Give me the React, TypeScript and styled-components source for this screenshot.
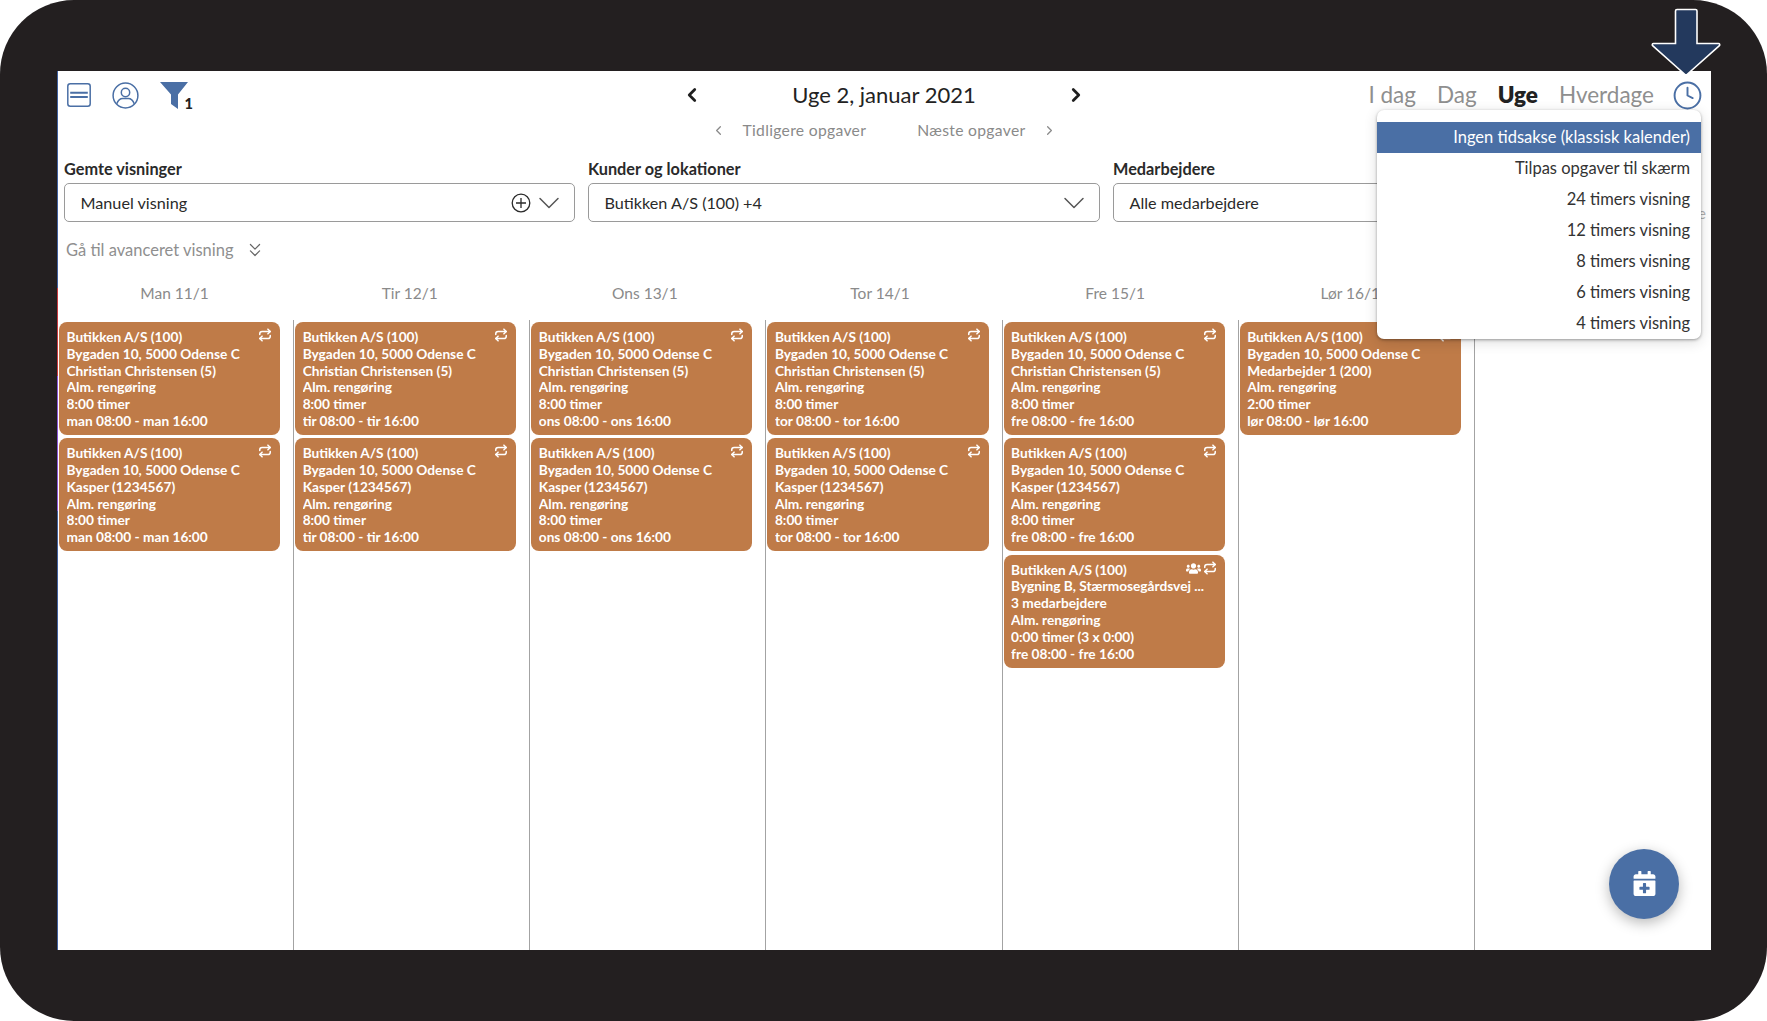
import React from "react";
import styled, { createGlobalStyle } from "styled-components";
import { ChevronDown, ChevronLeft, ChevronRight, ChevronsDown, Clock, Repeat } from "lucide-react";
import { FaCalendarPlus, FaUsers } from "react-icons/fa";

const FONT = `"Lato", "Open Sans", sans-serif`;
const BLUE = "#4a6fa5";

const Global = createGlobalStyle`
  html, body { margin: 0; padding: 0; background: #fff; }
  * { box-sizing: border-box; }
  body { font-family: ${FONT}; color: #2a2a2a; }
`;

const Frame = styled.div`
  position: relative;
  width: 1767px;
  height: 1021px;
  padding: 71px 56px 71px 57px;
  background: #231f20;
  border-radius: 74px;
  overflow: hidden;
`;
const Panel = styled.main`
  position: relative;
  height: 879px;
  background: #fff;
  display: flex;
  flex-direction: column;
  overflow: hidden;
  &::before {
    content: "";
    position: absolute;
    left: 0;
    top: 0;
    bottom: 0;
    width: 1px;
    background: linear-gradient(
      #3f5f9e 0 217px,
      #c8393f 217px 305px,
      #8a55d8 305px 440px,
      #3f5f9e 440px
    );
  }
`;
const TopBar = styled.header`
  height: 48px;
  display: grid;
  grid-template-columns: 1fr auto 1fr;
  align-items: center;
`;
const LeftIcons = styled.div`
  display: flex;
  align-items: center;
  gap: 21px;
  padding-left: 10px;
`;
const FilterIcon = styled.div`
  position: relative;
  width: 33px;
  height: 27px;
`;
const FilterCount = styled.span`
  position: absolute;
  right: 0;
  bottom: -2px;
  font-size: 14.5px;
  line-height: 14px;
  font-weight: 900;
  color: #222;
`;
const TitleGroup = styled.div`
  display: flex;
  align-items: center;
  gap: 89px;
  color: #1f1f1f;
`;
const Title = styled.h1`
  margin: 0;
  font-size: 22px;
  line-height: 28px;
  font-weight: 400;
  color: #222;
`;
const ViewTabs = styled.nav`
  display: flex;
  align-items: center;
  justify-content: flex-end;
  padding-right: 8px;
`;
const ViewTab = styled.span<{ $active?: boolean }>`
  margin-right: 21px;
  font-size: 22.5px;
  line-height: 28px;
  font-weight: ${(p) => (p.$active ? 800 : 400)};
  color: ${(p) => (p.$active ? "#222" : "#8f8f8f")};
  &:nth-last-of-type(1) { margin-right: 18px; }
`;
const SubNav = styled.div`
  height: 22px;
  display: flex;
  align-items: center;
  justify-content: center;
  gap: 17px;
  color: #8a8a8a;
  font-size: 15.7px;
  letter-spacing: 0.3px;
`;
const SubLabel = styled.span<{ $gap?: boolean }>`
  margin-left: ${(p) => (p.$gap ? "34px" : "0")};
`;
const Filters = styled.section`
  position: relative;
  display: grid;
  grid-template-columns: 511px 512px 511px;
  column-gap: 13px;
  margin-top: 18px;
  padding-left: 7px;
`;
const FilterColumn = styled.div`
  display: flex;
  flex-direction: column;
  gap: 4px;
`;
const FilterLabel = styled.label`
  font-size: 16.3px;
  line-height: 20px;
  font-weight: 700;
  color: #2a2a2a;
`;
const Select = styled.div`
  height: 39px;
  display: flex;
  align-items: center;
  padding: 0 7px 0 15.5px;
  border: 1.5px solid #9a9a9a;
  border-radius: 5px;
  font-size: 16.2px;
  color: #2a2a2a;
`;
const SelectValue = styled.span`
  flex: 1;
`;
const PlusBadge = styled.svg`
  width: 20px;
  height: 20px;
`;
const ClearLink = styled.span`
  position: absolute;
  right: 5px;
  top: 45px;
  font-size: 15px;
  color: #b0b0b0;
`;
const Advanced = styled.div`
  height: 20px;
  display: flex;
  align-items: center;
  gap: 10px;
  margin-top: 18px;
  padding-left: 9px;
  font-size: 16.5px;
  line-height: 20px;
  color: #8f8f8f;
`;
const DayHeaders = styled.div`
  display: grid;
  grid-template-columns: repeat(7, 1fr);
  height: 60px;
  padding: 23px 8px 0 0;
`;
const DayHeader = styled.div`
  text-align: center;
  font-size: 15.5px;
  line-height: 20px;
  color: #8a8a8a;
`;
const Board = styled.div`
  flex: 1;
  display: grid;
  grid-template-columns: repeat(7, 1fr);
  padding-left: 1px;
`;
const Column = styled.div`
  display: flex;
  flex-direction: column;
  gap: 3.3px;
  padding: 2px 13px 0 1px;
  border-right: 1.5px solid #a3a3a3;
  &:last-child { border-right: 0; }
`;
const Card = styled.article`
  position: relative;
  height: 113px;
  padding: 7px 7px 0 7.5px;
  border-radius: 8px;
  background: #bf7b48;
  color: #fff;
  font-size: 13.7px;
  line-height: 16.8px;
  font-weight: 700;
`;
const CardLine = styled.div`
  white-space: nowrap;
  overflow: hidden;
`;
const CardIcons = styled.div`
  position: absolute;
  top: 6px;
  right: 8px;
  display: flex;
  align-items: center;
  gap: 2px;
`;
const Dropdown = styled.ul`
  position: absolute;
  left: 1320px;
  top: 39px;
  width: 324px;
  height: 229px;
  margin: 0;
  padding: 12px 0 0;
  list-style: none;
  background: #fff;
  border-radius: 7px;
  box-shadow: 0 1px 3px rgba(0, 0, 0, 0.35), 0 3px 14px rgba(0, 0, 0, 0.14);
`;
const DropdownItem = styled.li<{ $active?: boolean }>`
  height: 31px;
  padding-right: 11px;
  text-align: right;
  font-size: 16.5px;
  line-height: 30px;
  background: ${(p) => (p.$active ? BLUE : "transparent")};
  color: ${(p) => (p.$active ? "#fff" : "#333")};
`;
const Fab = styled.button`
  position: absolute;
  left: 1552px;
  top: 777.5px;
  width: 70px;
  height: 70px;
  display: flex;
  align-items: center;
  justify-content: center;
  border: 0;
  border-radius: 50%;
  background: ${BLUE};
  color: #fff;
  box-shadow: 0 4px 14px rgba(0, 0, 0, 0.28);
`;
const ArrowMark = styled.svg`
  position: absolute;
  left: 1650px;
  top: 6px;
  width: 72px;
  height: 72px;
`;

type Task = { lines: string[]; team?: boolean };
const mk = (who: string, day: string, hours = "8:00 timer"): Task => ({
  lines: ["Butikken A/S (100)", "Bygaden 10, 5000 Odense C", who, "Alm. rengøring", hours, `${day} 08:00 - ${day} 16:00`],
});
const CHR = "Christian Christensen (5)";
const KAS = "Kasper (1234567)";
const days: { head: string; tasks: Task[] }[] = [
  { head: "Man 11/1", tasks: [mk(CHR, "man"), mk(KAS, "man")] },
  { head: "Tir 12/1", tasks: [mk(CHR, "tir"), mk(KAS, "tir")] },
  { head: "Ons 13/1", tasks: [mk(CHR, "ons"), mk(KAS, "ons")] },
  { head: "Tor 14/1", tasks: [mk(CHR, "tor"), mk(KAS, "tor")] },
  {
    head: "Fre 15/1",
    tasks: [
      mk(CHR, "fre"),
      mk(KAS, "fre"),
      {
        team: true,
        lines: ["Butikken A/S (100)", "Bygning B, Stærmosegårdsvej ...", "3 medarbejdere", "Alm. rengøring", "0:00 timer (3 x 0:00)", "fre 08:00 - fre 16:00"],
      },
    ],
  },
  { head: "Lør 16/1", tasks: [mk("Medarbejder 1 (200)", "lør", "2:00 timer")] },
  { head: "", tasks: [] },
];
const menu = ["Ingen tidsakse (klassisk kalender)", "Tilpas opgaver til skærm", "24 timers visning", "12 timers visning", "8 timers visning", "6 timers visning", "4 timers visning"];

export default function App() {
  return (
    <>
      <Global />
      <Frame>
        <Panel>
          <TopBar>
            <LeftIcons>
              <svg width="24" height="24" viewBox="0 0 24 24" fill="none" stroke={BLUE} strokeWidth="1.5">
                <rect x="0.8" y="0.8" width="22.4" height="22.4" rx="2.5" />
                <path d="M3.2 9.8h17.6M3.2 14h17.6" strokeWidth="2" />
              </svg>
              <svg width="27" height="27" viewBox="0 0 27 27" fill="none" stroke={BLUE} strokeWidth="1.5">
                <circle cx="13.5" cy="13.5" r="12.4" />
                <circle cx="13.5" cy="10.5" r="4.2" />
                <path d="M4.8 21.8c1-3 3-5.4 6-5.4h5.4c3 0 5 2.4 6 5.4" />
              </svg>
              <FilterIcon>
                <svg width="28" height="27" viewBox="0 0 28 27" fill={BLUE}>
                  <path d="M0 0h28L18 12.5V27l-7-5V12.5z" />
                </svg>
                <FilterCount>1</FilterCount>
              </FilterIcon>
            </LeftIcons>
            <TitleGroup>
              <ChevronLeft size={22} strokeWidth={3} />
              <Title>Uge 2, januar 2021</Title>
              <ChevronRight size={22} strokeWidth={3} />
            </TitleGroup>
            <ViewTabs>
              <ViewTab>I dag</ViewTab>
              <ViewTab>Dag</ViewTab>
              <ViewTab $active>Uge</ViewTab>
              <ViewTab>Hverdage</ViewTab>
              <Clock size={31} strokeWidth={1.5} color={BLUE} />
            </ViewTabs>
          </TopBar>
          <SubNav>
            <ChevronLeft size={15} strokeWidth={2} />
            <SubLabel>Tidligere opgaver</SubLabel>
            <SubLabel $gap>Næste opgaver</SubLabel>
            <ChevronRight size={15} strokeWidth={2} />
          </SubNav>
          <Filters>
            <FilterColumn>
              <FilterLabel>Gemte visninger</FilterLabel>
              <Select>
                <SelectValue>Manuel visning</SelectValue>
                <PlusBadge viewBox="0 0 20 20" fill="none" stroke="#2a2a2a" strokeWidth="1.3">
                  <circle cx="10" cy="10" r="8.8" />
                  <path d="M10 5v10M5 10h10" />
                </PlusBadge>
                <ChevronDown size={36} strokeWidth={1} color="#555" />
              </Select>
            </FilterColumn>
            <FilterColumn>
              <FilterLabel>Kunder og lokationer</FilterLabel>
              <Select>
                <SelectValue>Butikken A/S (100) +4</SelectValue>
                <ChevronDown size={36} strokeWidth={1} color="#555" />
              </Select>
            </FilterColumn>
            <FilterColumn>
              <FilterLabel>Medarbejdere</FilterLabel>
              <Select>
                <SelectValue>Alle medarbejdere</SelectValue>
              </Select>
            </FilterColumn>
            <ClearLink>e</ClearLink>
          </Filters>
          <Advanced>
            Gå til avanceret visning
            <ChevronsDown size={22} strokeWidth={1.3} color="#666" />
          </Advanced>
          <DayHeaders>
            {days.map((d, i) => (
              <DayHeader key={i}>{d.head}</DayHeader>
            ))}
          </DayHeaders>
          <Board>
            {days.map((d, i) => (
              <Column key={i}>
                {d.tasks.map((t, j) => (
                  <Card key={j}>
                    <CardIcons>
                      {t.team && <FaUsers size={15} />}
                      <Repeat size={14} strokeWidth={2.6} />
                    </CardIcons>
                    {t.lines.map((l, k) => (
                      <CardLine key={k}>{l}</CardLine>
                    ))}
                  </Card>
                ))}
              </Column>
            ))}
          </Board>
          <Dropdown>
            {menu.map((m, i) => (
              <DropdownItem key={m} $active={i === 0}>
                {m}
              </DropdownItem>
            ))}
          </Dropdown>
          <Fab aria-label="Ny opgave">
            <FaCalendarPlus size={25} />
          </Fab>
        </Panel>
        <ArrowMark viewBox="0 0 72 72">
          <path d="M27 3.5h18.5a1.5 1.5 0 0 1 1.5 1.5v32.5h21.5a1.3 1.3 0 0 1 .9 2.2L37 68.5a1.5 1.5 0 0 1-2 0L2.6 39.7a1.3 1.3 0 0 1 .9-2.2h22V5a1.5 1.5 0 0 1 1.5-1.5z" fill="#23395d" stroke="#fff" strokeWidth="1.6" />
        </ArrowMark>
      </Frame>
    </>
  );
}
